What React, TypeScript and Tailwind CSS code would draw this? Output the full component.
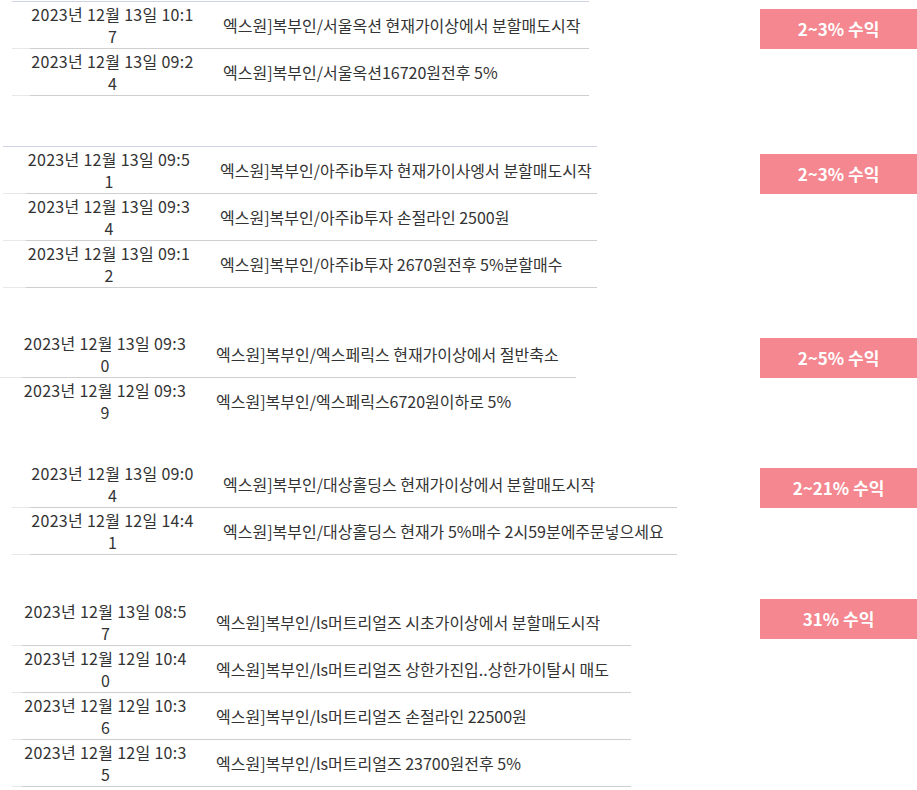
import React from "react";

type Row = { d1: string; d2: string; text: string };
type Group = {
  rows: Row[];
  badge: string;
  mt: string;
  left: string;
  spacer: string;
  dateW: string;
  textPl: string;
  width: string;
  topLine: boolean;
  lastLine: boolean;
  badgeMt: string;
};

const groups: Group[] = [
  {
    rows: [
      { d1: "2023년 12월 13일 10:1", d2: "7", text: "엑스원]복부인/서울옥션 현재가이상에서 분할매도시작" },
      { d1: "2023년 12월 13일 09:2", d2: "4", text: "엑스원]복부인/서울옥션16720원전후 5%" },
    ],
    badge: "2~3% 수익",
    mt: "mt-[1px]",
    left: "ml-[12px]",
    spacer: "w-[18px]",
    dateW: "w-[165px]",
    textPl: "pl-[28px]",
    width: "w-[577px]",
    topLine: true,
    lastLine: true,
    badgeMt: "mt-[8px]",
  },
  {
    rows: [
      { d1: "2023년 12월 13일 09:5", d2: "1", text: "엑스원]복부인/아주ib투자 현재가이사엥서 분할매도시작" },
      { d1: "2023년 12월 13일 09:3", d2: "4", text: "엑스원]복부인/아주ib투자 손절라인 2500원" },
      { d1: "2023년 12월 13일 09:1", d2: "2", text: "엑스원]복부인/아주ib투자 2670원전후 5%분할매수" },
    ],
    badge: "2~3% 수익",
    mt: "mt-[50px]",
    left: "ml-[3px]",
    spacer: "w-[23px]",
    dateW: "w-[166px]",
    textPl: "pl-[28px]",
    width: "w-[594px]",
    topLine: true,
    lastLine: true,
    badgeMt: "mt-[8px]",
  },
  {
    rows: [
      { d1: "2023년 12월 13일 09:3", d2: "0", text: "엑스원]복부인/엑스페릭스 현재가이상에서 절반축소" },
      { d1: "2023년 12월 12일 09:3", d2: "9", text: "엑스원]복부인/엑스페릭스6720원이하로 5%" },
    ],
    badge: "2~5% 수익",
    mt: "mt-[42px]",
    left: "ml-[0px]",
    spacer: "w-[22px]",
    dateW: "w-[166px]",
    textPl: "pl-[28px]",
    width: "w-[576px]",
    topLine: false,
    lastLine: false,
    badgeMt: "mt-[8px]",
  },
  {
    rows: [
      { d1: "2023년 12월 13일 09:0", d2: "4", text: "엑스원]복부인/대상홀딩스 현재가이상에서 분할매도시작" },
      { d1: "2023년 12월 12일 14:4", d2: "1", text: "엑스원]복부인/대상홀딩스 현재가 5%매수 2시59분에주문넣으세요" },
    ],
    badge: "2~21% 수익",
    mt: "mt-[35px]",
    left: "ml-[12px]",
    spacer: "w-[18px]",
    dateW: "w-[165px]",
    textPl: "pl-[28px]",
    width: "w-[665px]",
    topLine: false,
    lastLine: true,
    badgeMt: "mt-[8px]",
  },
  {
    rows: [
      { d1: "2023년 12월 13일 08:5", d2: "7", text: "엑스원]복부인/ls머트리얼즈 시초가이상에서 분할매도시작" },
      { d1: "2023년 12월 12일 10:4", d2: "0", text: "엑스원]복부인/ls머트리얼즈 상한가진입..상한가이탈시 매도" },
      { d1: "2023년 12월 12일 10:3", d2: "6", text: "엑스원]복부인/ls머트리얼즈 손절라인 22500원" },
      { d1: "2023년 12월 12일 10:3", d2: "5", text: "엑스원]복부인/ls머트리얼즈 23700원전후 5%" },
    ],
    badge: "31% 수익",
    mt: "mt-[43px]",
    left: "ml-[12px]",
    spacer: "w-[10px]",
    dateW: "w-[167px]",
    textPl: "pl-[27px]",
    width: "w-[619px]",
    topLine: false,
    lastLine: true,
    badgeMt: "mt-[1px]",
  },
];

function GroupView({ g }: { g: Group }) {
  return (
    <div className={`flex ${g.mt}`}>
      <div className="w-[760px] shrink-0">
        <div
          className={`${g.left} ${g.width} border-t ${
            g.topLine ? "border-[#cdd2e4]" : "border-transparent"
          }`}
        >
          {g.rows.map((r, i) => {
            const isLast = i === g.rows.length - 1;
            const line = !isLast || g.lastLine;
            const dark = line ? "border-[#cfcfcf]" : "border-transparent";
            const light = line ? "border-[#e8e8e8]" : "border-transparent";
            return (
              <div key={i} className="flex">
                <div className={`${g.spacer} shrink-0 border-b ${light}`} />
                <div
                  className={`${g.dateW} shrink-0 h-[47px] border-b ${dark} flex flex-col justify-center items-center text-center leading-[22px] tracking-[0.3px]`}
                >
                  <span className="whitespace-nowrap">{r.d1}</span>
                  <span>{r.d2}</span>
                </div>
                <div
                  className={`flex-1 h-[47px] border-b ${dark} flex items-center ${g.textPl} whitespace-nowrap`}
                >
                  {r.text}
                </div>
              </div>
            );
          })}
        </div>
      </div>
      <div
        className={`${g.badgeMt} w-[157px] h-[40px] shrink-0 bg-[#f4878f] text-white font-bold text-[17px] flex items-center justify-center`}
      >
        {g.badge}
      </div>
    </div>
  );
}

export default function App() {
  return (
    <div
      className="w-[917px] min-h-[790px] bg-white text-[#333333] text-[16px] overflow-hidden"
      style={{ fontFamily: '"Noto Sans CJK KR", "Noto Sans", sans-serif' }}
    >
      {groups.map((g, i) => (
        <GroupView key={i} g={g} />
      ))}
    </div>
  );
}
